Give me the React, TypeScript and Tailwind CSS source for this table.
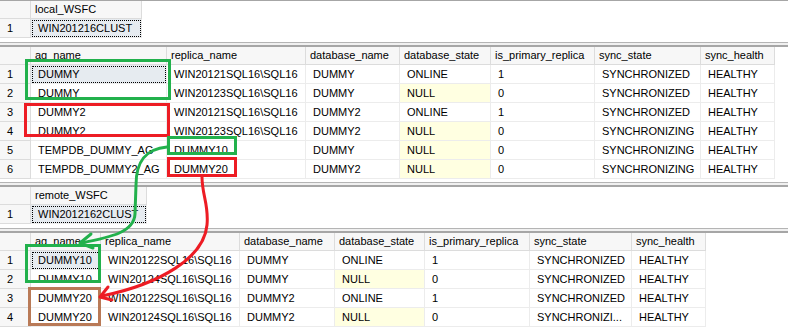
import React from "react"

type Col = { name: string; w: string }

// SSMS-style result grid. Widths are written out as full class names.
function ResultGrid({
  cols,
  rows,
  selected,
  nulls = [],
}: {
  cols: Col[]
  rows: string[][]
  selected?: [number, number]
  nulls?: string[]
}) {
  return (
    <div className="flex flex-col">
      <div className="flex h-[18px]">
        <div className="w-[31px] shrink-0 border-r border-b border-[#dcdcdc] bg-[#f7f7f7]" />
        {cols.map((c) => (
          <div
            key={c.name}
            className={`${c.w} shrink-0 border-r border-b border-[#dcdcdc] bg-[#f7f7f7] pl-[4px] leading-[17px] whitespace-nowrap overflow-hidden`}
          >
            {c.name}
          </div>
        ))}
      </div>
      {rows.map((r, i) => (
        <div key={i} className="flex h-[19px]">
          <div className="w-[31px] shrink-0 border-r border-b border-[#dcdcdc] bg-[#f7f7f7] pl-[7px] leading-[18px]">
            {i + 1}
          </div>
          {r.map((v, j) => {
            const isSel = selected && selected[0] === i && selected[1] === j
            const isNull = nulls.includes(`${i}:${j}`)
            return (
              <div
                key={j}
                className={`${cols[j].w} shrink-0 border-r border-b border-[#ececec] pl-[7px] leading-[18px] whitespace-nowrap overflow-hidden ${
                  isSel
                    ? "bg-[#e6ebf0] outline-1 outline-dotted outline-black -outline-offset-2"
                    : isNull
                      ? "bg-[#ffffe1]"
                      : "bg-white"
                }`}
              >
                {v}
              </div>
            )
          })}
        </div>
      ))}
    </div>
  )
}

function Splitter() {
  return (
    <div className="w-[788px] h-[5px] border-t border-[#b4b4b4] border-b-2 border-b-[#a6a6a6] bg-[#f0f0f0]" />
  )
}

const agCols: Col[] = [
  { name: "ag_name", w: "w-[136px]" },
  { name: "replica_name", w: "w-[139px]" },
  { name: "database_name", w: "w-[94px]" },
  { name: "database_state", w: "w-[91px]" },
  { name: "is_primary_replica", w: "w-[104px]" },
  { name: "sync_state", w: "w-[106px]" },
  { name: "sync_health", w: "w-[74px]" },
]

const remoteCols: Col[] = [
  { name: "ag_name", w: "w-[70px]" },
  { name: "replica_name", w: "w-[139px]" },
  { name: "database_name", w: "w-[95px]" },
  { name: "database_state", w: "w-[90px]" },
  { name: "is_primary_replica", w: "w-[105px]" },
  { name: "sync_state", w: "w-[102px]" },
  { name: "sync_health", w: "w-[74px]" },
]

const localRows = [
  ["DUMMY", "WIN20121SQL16\\SQL16", "DUMMY", "ONLINE", "1", "SYNCHRONIZED", "HEALTHY"],
  ["DUMMY", "WIN20123SQL16\\SQL16", "DUMMY", "NULL", "0", "SYNCHRONIZED", "HEALTHY"],
  ["DUMMY2", "WIN20121SQL16\\SQL16", "DUMMY2", "ONLINE", "1", "SYNCHRONIZED", "HEALTHY"],
  ["DUMMY2", "WIN20123SQL16\\SQL16", "DUMMY2", "NULL", "0", "SYNCHRONIZING", "HEALTHY"],
  ["TEMPDB_DUMMY_AG", "DUMMY10", "DUMMY", "NULL", "0", "SYNCHRONIZING", "HEALTHY"],
  ["TEMPDB_DUMMY2_AG", "DUMMY20", "DUMMY2", "NULL", "0", "SYNCHRONIZING", "HEALTHY"],
]

const remoteRows = [
  ["DUMMY10", "WIN20122SQL16\\SQL16", "DUMMY", "ONLINE", "1", "SYNCHRONIZED", "HEALTHY"],
  ["DUMMY10", "WIN20124SQL16\\SQL16", "DUMMY", "NULL", "0", "SYNCHRONIZED", "HEALTHY"],
  ["DUMMY20", "WIN20122SQL16\\SQL16", "DUMMY2", "ONLINE", "1", "SYNCHRONIZED", "HEALTHY"],
  ["DUMMY20", "WIN20124SQL16\\SQL16", "DUMMY2", "NULL", "0", "SYNCHRONIZI...", "HEALTHY"],
]

// Hand-drawn paint annotations over the grids.
function Annotations() {
  return (
    <svg className="absolute inset-0 pointer-events-none" width="797" height="329" fill="none" strokeWidth="3">
      <rect x="26.5" y="60.5" width="143" height="38" stroke="#22b14c" />
      <rect x="25.5" y="104.5" width="143" height="31" stroke="#ed1c24" />
      <rect x="168.5" y="137.5" width="67" height="16" stroke="#22b14c" />
      <rect x="168.5" y="158.5" width="67" height="17" stroke="#ed1c24" />
      <rect x="26.5" y="245.5" width="73" height="36" stroke="#22b14c" />
      <rect x="29.5" y="288.5" width="70" height="36" stroke="#b97a57" />
      <path
        d="M167 147 C145 149 136 162 136 185 L135 214 C134 232 112 237 81 243"
        stroke="#22b14c"
        strokeLinecap="round"
      />
      <path d="M91 234 L80 243 L93 248" stroke="#22b14c" strokeLinecap="round" strokeLinejoin="round" />
      <path
        d="M202 177 C202 195 209 205 207 225 C204 258 160 284 102 296"
        stroke="#ed1c24"
        strokeLinecap="round"
      />
      <path d="M108 287 L100 297 L112 300" stroke="#ed1c24" strokeLinecap="round" strokeLinejoin="round" />
    </svg>
  )
}

export default function App() {
  return (
    <div className="relative w-[797px] h-[329px] overflow-hidden bg-white text-black text-[11px] font-['Liberation_Sans',Arial,sans-serif]">
      <div className="w-[788px] h-px bg-[#a6a6a6]" />
      <ResultGrid cols={[{ name: "local_WSFC", w: "w-[111px]" }]} rows={[["WIN201216CLUST"]]} selected={[0, 0]} />
      <div className="h-[4px]" />
      <Splitter />
      <ResultGrid cols={agCols} rows={localRows} selected={[0, 0]} nulls={["1:3", "3:3", "4:3", "5:3"]} />
      <div className="h-[3px]" />
      <Splitter />
      <ResultGrid cols={[{ name: "remote_WSFC", w: "w-[116px]" }]} rows={[["WIN2012162CLUST"]]} selected={[0, 0]} />
      <div className="h-[4px]" />
      <Splitter />
      <ResultGrid cols={remoteCols} rows={remoteRows} selected={[0, 0]} nulls={["1:3", "3:3"]} />
      <Annotations />
    </div>
  )
}
